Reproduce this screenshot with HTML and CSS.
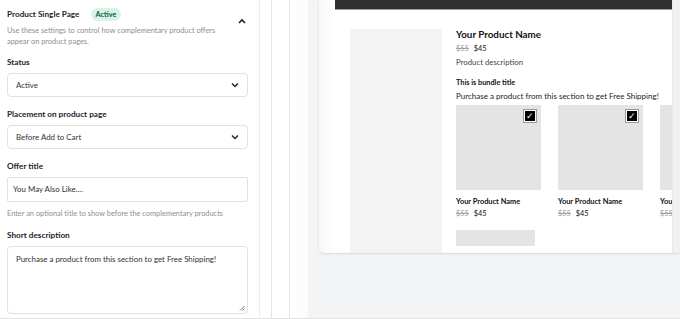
FILE: index.html
```html
<!DOCTYPE html>
<html lang="en">
<head>
    <meta charset="UTF-8">
    <title>Product Single Page - Settings</title>
    <link rel="stylesheet" href="styles.css">
</head>
<body>
    <div class="layout">
        <!-- Settings sidebar -->
        <aside class="settings">
            <div class="panel-head">
                <div class="panel-intro">
                    <div class="panel-title">
                        <span>Product Single Page</span>
                        <span class="badge">Active</span>
                    </div>
                    <p class="panel-desc">Use these settings to control how complementary product offers appear on product pages.</p>
                </div>
                <svg class="chev-up" width="8" height="6" viewBox="0 0 8 6">
                    <polyline points="1,5 4,2 7,5" fill="none" stroke="#1d2327" stroke-width="1.6"/>
                </svg>
            </div>

            <div class="field">
                <label>Status</label>
                <div class="select">
                    <span>Active</span>
                    <svg width="8" height="6" viewBox="0 0 8 6"><polyline points="1,1.5 4,4.5 7,1.5" fill="none" stroke="#1d2327" stroke-width="1.5"/></svg>
                </div>
            </div>

            <div class="field">
                <label>Placement on product page</label>
                <div class="select">
                    <span>Before Add to Cart</span>
                    <svg width="8" height="6" viewBox="0 0 8 6"><polyline points="1,1.5 4,4.5 7,1.5" fill="none" stroke="#1d2327" stroke-width="1.5"/></svg>
                </div>
            </div>

            <div class="field">
                <label>Offer title</label>
                <div class="input">You May Also Like....</div>
                <p class="help">Enter an optional title to show before the complementary products</p>
            </div>

            <div class="field field-last">
                <label>Short description</label>
                <div class="textarea">
                    Purchase a product from this section to get Free Shipping!
                    <svg class="grip" width="6" height="6" viewBox="0 0 6 6">
                        <line x1="1" y1="5.5" x2="5.5" y2="1" stroke="#555" stroke-width="0.8"/>
                        <line x1="3.5" y1="5.5" x2="5.5" y2="3.5" stroke="#555" stroke-width="0.8"/>
                    </svg>
                </div>
            </div>
        </aside>

        <div class="rail"></div>
        <div class="rail rail-wide"></div>
        <div class="rail rail-wide rail-soft"></div>

        <!-- Live preview -->
        <main class="preview">
            <div class="frame">
                <div class="frame-edge"></div>
                <div class="frame-body">
                    <div class="topbar"></div>
                    <div class="product">
                        <div class="product-image"></div>
                        <div class="product-info">
                            <h2 class="name">Your Product Name</h2>
                            <div class="price"><s>$55</s><span>$45</span></div>
                            <p class="desc">Product description</p>

                            <h3 class="bundle-title">This is bundle title</h3>
                            <p class="bundle-desc">Purchase a product from this section to get Free Shipping!</p>

                            <div class="tiles">
                                <div class="tile">
                                    <div class="tile-img"><span class="check">✓</span></div>
                                    <div class="tile-name">Your Product Name</div>
                                    <div class="price small"><s>$55</s><span>$45</span></div>
                                </div>
                                <div class="tile">
                                    <div class="tile-img"><span class="check">✓</span></div>
                                    <div class="tile-name">Your Product Name</div>
                                    <div class="price small"><s>$55</s><span>$45</span></div>
                                </div>
                                <div class="tile">
                                    <div class="tile-img"><span class="check">✓</span></div>
                                    <div class="tile-name">Your Product Name</div>
                                    <div class="price small"><s>$55</s><span>$45</span></div>
                                </div>
                            </div>

                            <div class="add-btn"></div>
                        </div>
                    </div>
                </div>
                <div class="scrollbar"></div>
            </div>
        </main>
    </div>
</body>
</html>
```

FILE: styles.css
```css
* {
    box-sizing: border-box;
    margin: 0;
    padding: 0;
}

body {
    width: 680px;
    height: 319px;
    overflow: hidden;
    font-family: 'Lato', 'Liberation Sans', sans-serif;
    color: #1d2327;
    background: #f3f4f6;
}

.layout {
    display: flex;
    height: 319px;
    border-bottom: 1px solid #e2e2e2;
}

/* ---------- settings sidebar ---------- */

.settings {
    width: 260px;
    flex-shrink: 0;
    background: #fff;
    border-right: 1px solid #ececec;
    padding: 7px 11px 0 7px;
    overflow: hidden;
}

.panel-head {
    display: flex;
    justify-content: space-between;
    align-items: flex-start;
}

.panel-intro {
    width: 225px;
}

.panel-title {
    display: flex;
    align-items: center;
    height: 14px;
    font-size: 8.2px;
    font-weight: 700;
}

.badge {
    margin-left: 11px;
    padding: 0 5px;
    height: 13px;
    line-height: 13px;
    border-radius: 7px;
    background: #d9f4e7;
    color: #0b5e43;
    font-size: 7.3px;
    font-weight: 700;
}

.chev-up {
    margin-top: 11px;
    margin-right: 2px;
}

.panel-desc {
    margin-top: 4px;
    font-size: 7.4px;
    line-height: 11px;
    color: #8c8f94;
}

.field {
    margin-top: 9px;
}

.field + .field {
    margin-top: 11px;
}

.field-last {
    margin-top: 10px !important;
}

label {
    display: block;
    font-size: 8.2px;
    font-weight: 700;
    line-height: 12px;
    margin-bottom: 5px;
}

.select,
.input,
.textarea {
    border: 1px solid #e1e1e1;
    border-radius: 4px;
    background: #fff;
    font-size: 7.9px;
    color: #2c3338;
}

.select {
    height: 24px;
    display: flex;
    align-items: center;
    justify-content: space-between;
    padding: 0 8px 0 8px;
}

.input {
    height: 25px;
    line-height: 23px;
    padding-left: 5px;
    border-radius: 2px;
}

.help {
    margin-top: 6px;
    font-size: 7.4px;
    line-height: 11px;
    color: #8c8f94;
}

.textarea {
    position: relative;
    height: 68px;
    padding: 7px 8px;
    line-height: 11px;
}

.grip {
    position: absolute;
    right: 2px;
    bottom: 2px;
}

/* ---------- rails between sidebar and preview ---------- */

.rail {
    width: 12px;
    flex-shrink: 0;
    background: #fff;
    border-right: 1px solid #e6e6e6;
}

.rail-wide {
    width: 18px;
}

.rail-soft {
    border-right: none;
    background: linear-gradient(90deg, #fff 0%, #fbfbfc 100%);
}

/* ---------- preview ---------- */

.preview {
    flex: 1;
    padding-left: 11px;
    overflow: hidden;
}

.frame {
    display: flex;
    width: 362px;
    height: 253px;
    background: #fff;
    border-radius: 0 0 5px 5px;
    box-shadow: 0 1px 2px rgba(0, 0, 0, 0.12);
    overflow: hidden;
}

.frame-edge {
    width: 16px;
    flex-shrink: 0;
    background: linear-gradient(90deg, #f7f7f7 0%, #fff 100%);
}

.frame-body {
    width: 337px;
    flex-shrink: 0;
    overflow: hidden;
}

.scrollbar {
    flex: 1;
    background: #f1f1f1;
    border-left: 1px solid #e8e8e8;
}

.topbar {
    height: 10px;
    background: #2f2f2f;
    border-bottom: 1px solid #9a9a9a;
}

.product {
    display: flex;
    gap: 14px;
    padding: 19px 0 0 15px;
}

.product-image {
    width: 92px;
    height: 240px;
    flex-shrink: 0;
    background: #f3f3f3;
}

.product-info {
    flex-shrink: 0;
    width: 230px;
}

.name {
    margin-top: 1px;
    font-size: 9.8px;
    font-weight: 700;
    line-height: 9px;
    color: #111;
}

.price {
    display: flex;
    gap: 5px;
    margin-top: 4px;
    font-size: 7.3px;
    line-height: 12px;
    color: #111;
}

.price s {
    color: #a0a0a0;
}

.desc {
    margin-top: 1px;
    font-size: 7.8px;
    line-height: 12px;
    color: #444;
}

.bundle-title {
    margin-top: 8.5px;
    font-size: 7.3px;
    font-weight: 700;
    line-height: 11px;
    color: #111;
}

.bundle-desc {
    margin-top: 3px;
    font-size: 8px;
    line-height: 11px;
    color: #222;
}

.tiles {
    display: flex;
    gap: 17px;
    margin-top: 3.5px;
}

.tile {
    width: 85px;
    flex-shrink: 0;
}

.tile-img {
    position: relative;
    height: 85px;
    background: #e4e4e4;
}

.check {
    position: absolute;
    top: 5px;
    right: 5px;
    width: 12px;
    height: 12px;
    background: #000;
    border: 1px solid #fff;
    outline: 1px solid #999;
    color: #fff;
    font-size: 9px;
    line-height: 10px;
    text-align: center;
}

.tile-name {
    margin-top: 6px;
    font-size: 7.4px;
    font-weight: 700;
    line-height: 12px;
    color: #111;
}

.price.small {
    margin-top: 0;
}

.add-btn {
    width: 79px;
    height: 16px;
    margin-top: 10px;
    background: #e4e4e4;
}
```
